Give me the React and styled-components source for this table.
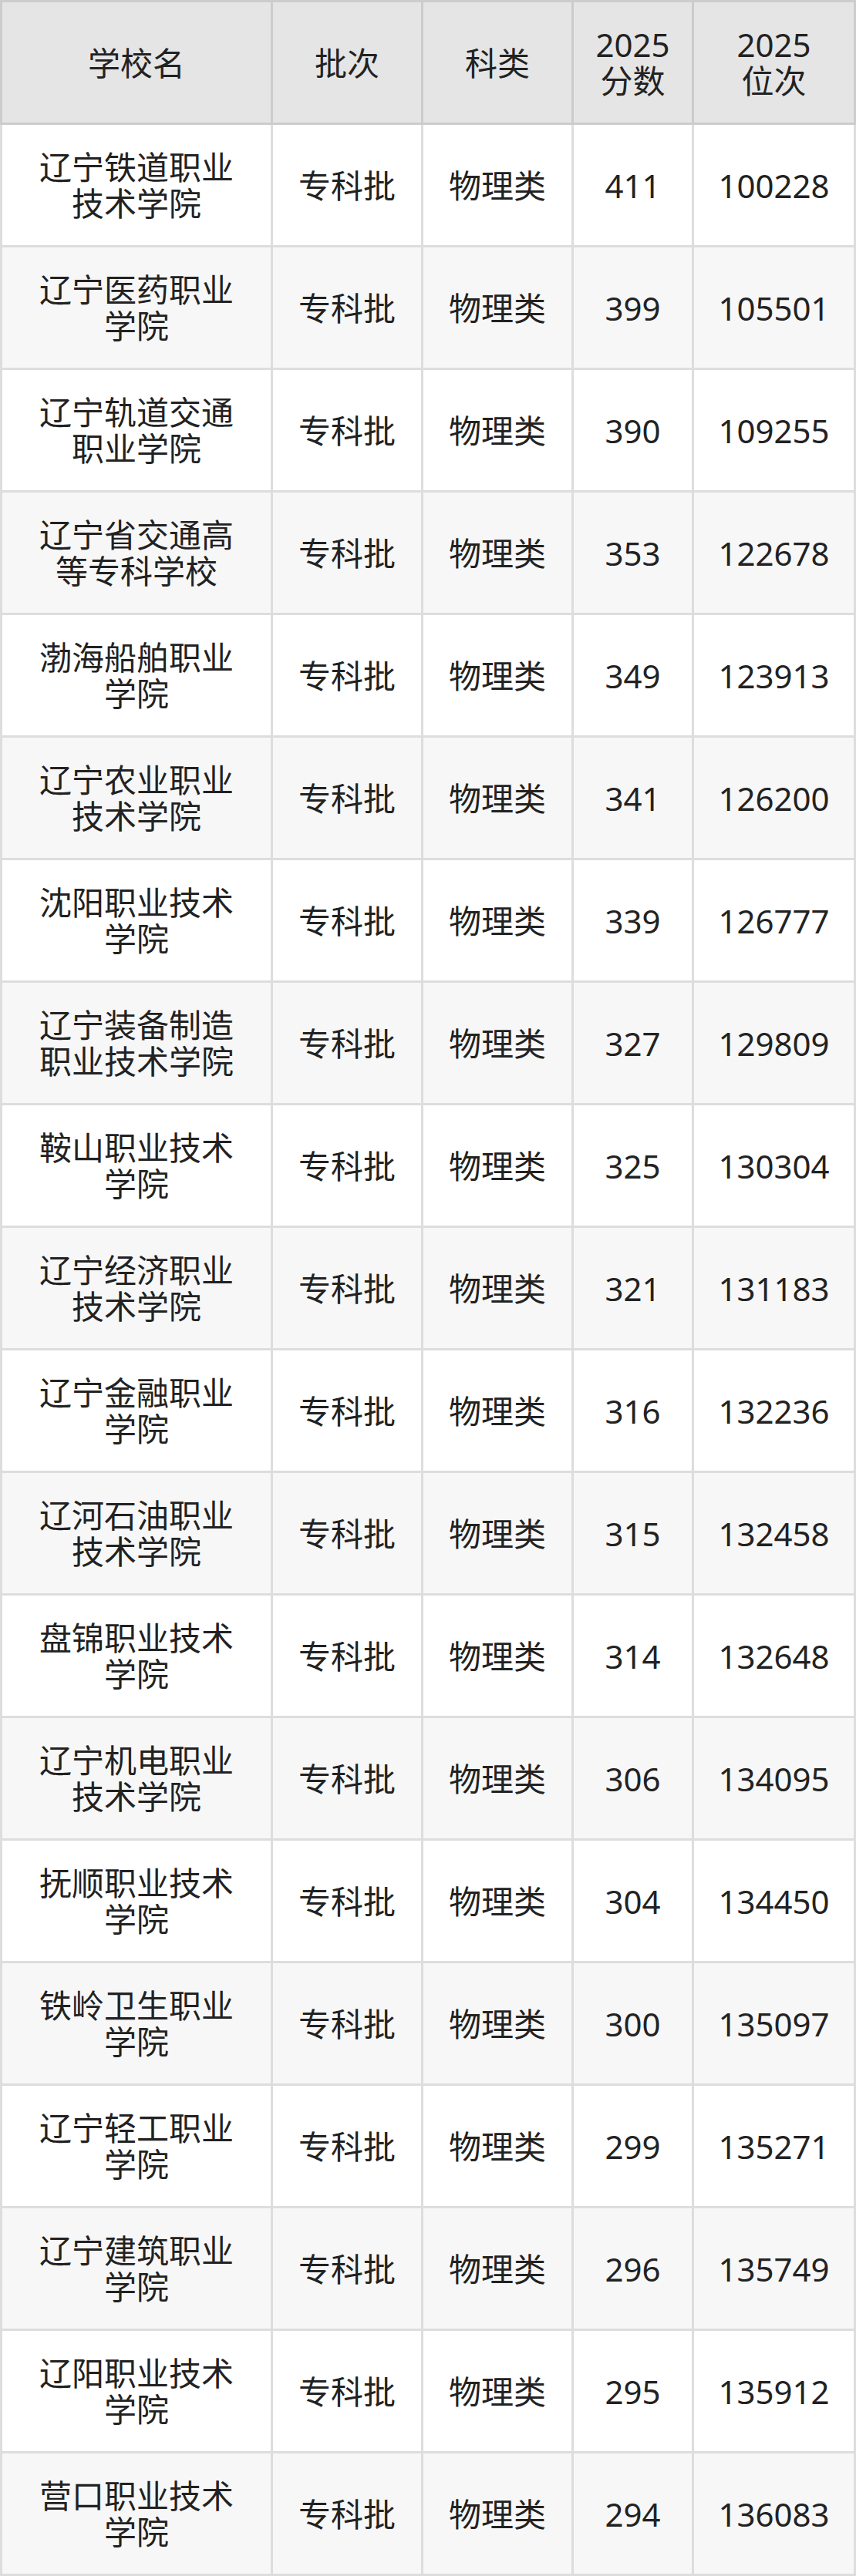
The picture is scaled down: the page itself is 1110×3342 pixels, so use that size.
import styled, { createGlobalStyle } from "styled-components";

const GlobalStyle = createGlobalStyle`
  html, body {
    margin: 0;
    padding: 0;
    background: #fff;
  }
  body {
    font-family: "Noto Sans", "Noto Sans CJK SC", sans-serif;
    color: #222;
  }
`;

const Table = styled.table`
  width: 1110px;
  table-layout: fixed;
  border-collapse: separate;
  border-spacing: 0;
  font-size: 42px;
  line-height: 47px;
  color: #222;
`;

const HeadCell = styled.th`
  box-sizing: border-box;
  width: ${(p) => p.$width}px;
  height: 162px;
  padding: 0 10px;
  background: #e5e5e5;
  border-top: 3px solid #cccccc;
  border-right: 3px solid #cccccc;
  border-bottom: 3px solid #cccccc;
  font-weight: 400;
  text-align: center;
  vertical-align: middle;

  &:first-child {
    border-left: 3px solid #cccccc;
  }
`;

const Cell = styled.td`
  box-sizing: border-box;
  height: 159px;
  padding: 0 ${(p) => (p.$wide ? 36 : 10)}px;
  background: ${(p) => (p.$even ? "#f7f7f7" : "#ffffff")};
  border-right: 3px solid #dddddd;
  border-bottom: 3px solid #dddddd;
  text-align: center;
  vertical-align: middle;

  &:first-child {
    border-left: 3px solid #dddddd;
  }
`;

const columns = [
  { label: "学校名", width: 354 },
  { label: "批次", width: 195 },
  { label: "科类", width: 195 },
  { label: ["2025", "分数"], width: 156 },
  { label: ["2025", "位次"], width: 210 },
];

const rows = [
  ["辽宁铁道职业技术学院", 411, 100228],
  ["辽宁医药职业学院", 399, 105501],
  ["辽宁轨道交通职业学院", 390, 109255],
  ["辽宁省交通高等专科学校", 353, 122678],
  ["渤海船舶职业学院", 349, 123913],
  ["辽宁农业职业技术学院", 341, 126200],
  ["沈阳职业技术学院", 339, 126777],
  ["辽宁装备制造职业技术学院", 327, 129809],
  ["鞍山职业技术学院", 325, 130304],
  ["辽宁经济职业技术学院", 321, 131183],
  ["辽宁金融职业学院", 316, 132236],
  ["辽河石油职业技术学院", 315, 132458],
  ["盘锦职业技术学院", 314, 132648],
  ["辽宁机电职业技术学院", 306, 134095],
  ["抚顺职业技术学院", 304, 134450],
  ["铁岭卫生职业学院", 300, 135097],
  ["辽宁轻工职业学院", 299, 135271],
  ["辽宁建筑职业学院", 296, 135749],
  ["辽阳职业技术学院", 295, 135912],
  ["营口职业技术学院", 294, 136083],
];

function App() {
  return (
    <>
      <GlobalStyle />
      <Table>
        <thead>
          <tr>
            {columns.map((col, i) => (
              <HeadCell key={i} $width={col.width}>
                {Array.isArray(col.label) ? (
                  <>
                    {col.label[0]}
                    <br />
                    {col.label[1]}
                  </>
                ) : (
                  col.label
                )}
              </HeadCell>
            ))}
          </tr>
        </thead>
        <tbody>
          {rows.map(([name, score, rank], i) => {
            const even = i % 2 === 1;
            return (
              <tr key={name}>
                <Cell $even={even} $wide>
                  {name}
                </Cell>
                <Cell $even={even}>专科批</Cell>
                <Cell $even={even}>物理类</Cell>
                <Cell $even={even}>{score}</Cell>
                <Cell $even={even}>{rank}</Cell>
              </tr>
            );
          })}
        </tbody>
      </Table>
    </>
  );
}

export default App;
